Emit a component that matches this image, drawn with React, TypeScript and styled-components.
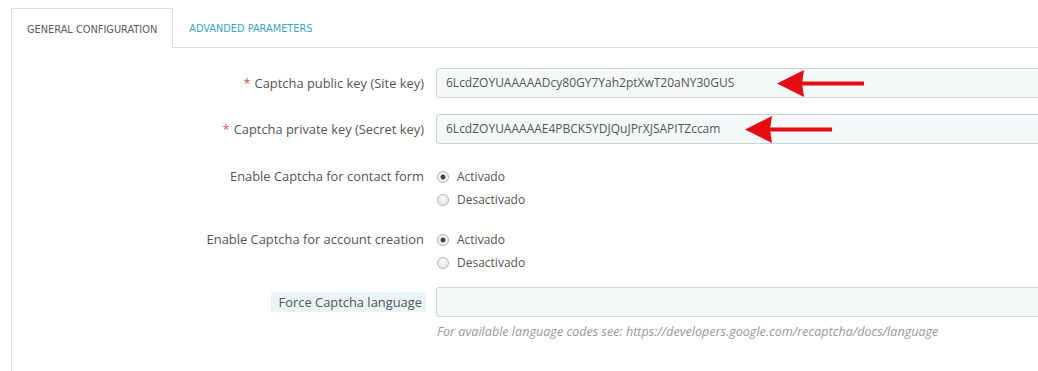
import React, {FC} from 'react';
import styled, {createGlobalStyle} from 'styled-components';

const GlobalStyle = createGlobalStyle`
  html, body {
    margin: 0;
    padding: 0;
    background: #fff;
    overflow: hidden;
  }
  body {
    font-family: "Open Sans", "Liberation Sans", sans-serif;
    font-size: 12px;
    color: #555;
  }
`;

const Page = styled.div`
  width: 1038px;
  height: 371px;
  overflow: hidden;
  padding-left: 11px;
  padding-top: 8px;
  box-sizing: border-box;
`;

const TabBar = styled.ul`
  display: flex;
  list-style: none;
  margin: 0;
  padding: 0;
  border-bottom: 1px solid #ddd;
  > li {
    height: 38px;
    display: flex;
    align-items: center;
    padding: 1px 15px 0;
    box-sizing: border-box;
    margin-bottom: -1px;
    font-family: "Liberation Sans Narrow", "DejaVu Sans Condensed", "Roboto", sans-serif;
    font-stretch: condensed;
    font-size: 10.9px;
    text-transform: uppercase;
    color: #3ba5bf;
    border: 1px solid transparent;
    border-bottom: none;
    &.selected {
      color: #5a5a5a;
      border-color: #ddd;
      background: #fff;
      height: 40px;
    }
  }
`;

const Panel = styled.div`
  border-left: 1px solid #ddd;
  height: 400px;
  padding-top: 20px;
`;

const Row = styled.div<{$mt?: number}>`
  display: grid;
  grid-template-columns: 412px 700px;
  column-gap: 12px;
  align-items: start;
  margin-top: ${p => p.$mt ?? 0}px;
`;

const Label = styled.div<{$tall?: boolean}>`
  justify-self: end;
  font-size: 12.9px;
  color: #555;
  line-height: ${p => (p.$tall ? 30 : 23)}px;
  white-space: nowrap;
`;

const HintLabel = styled.div`
  justify-self: end;
  font-size: 12.9px;
  color: #555;
  background: #e9f4f7;
  padding: 0 4px 0 8px;
  line-height: 20px;
  margin-top: 5px;
  margin-right: -2px;
`;

const Required = styled.span`
  color: #d9534f;
  margin-right: 4px;
`;

const Field = styled.div`
  position: relative;
`;

const TextInput = styled.div`
  height: 28px;
  width: 700px;
  box-sizing: content-box;
  border: 1px solid #c7d6db;
  border-radius: 3px;
  background: #f5f8f9;
  padding: 0 9px;
  line-height: 28px;
  font-size: 12px;
  color: #555;
`;

const Help = styled.div`
  font-style: italic;
  color: #999;
  font-size: 12.6px;
  margin-top: 6px;
  padding-left: 1px;
`;

const RadioList = styled.div`
  display: flex;
  flex-direction: column;
`;

const RadioOption = styled.div<{$checked?: boolean}>`
  display: flex;
  align-items: center;
  height: 23px;
  padding-left: 1px;
  font-size: 12px;
  color: #555;
  &::before {
    content: '';
    width: 10px;
    height: 10px;
    border-radius: 50%;
    border: 1px solid #b5b5b5;
    margin-right: 8px;
    background: ${p => (p.$checked
      ? 'radial-gradient(circle, #444 0 2.2px, #f4f4f4 2.8px, #e6e6e6 100%)'
      : 'radial-gradient(circle at 50% 35%, #fbfbfb 0, #e0e0e0 100%)')};
  }
`;

const ArrowWrap = styled.svg<{$left: number}>`
  position: absolute;
  top: 1px;
  left: ${p => p.$left}px;
`;

const Arrow: FC<{left: number, length: number}> = ({left, length}) => (
  <ArrowWrap $left={left} width={length} height="29" viewBox={`0 0 ${length} 29`}>
    <polygon points="0,14.5 27,1 25,14.5 27,28" fill="#e50d12"/>
    <rect x="24" y="12.5" width={length - 24} height="4" fill="#e50d12"/>
  </ArrowWrap>
);

const Radios: FC = () => (
  <RadioList>
    <RadioOption $checked>Activado</RadioOption>
    <RadioOption>Desactivado</RadioOption>
  </RadioList>
);

const App: FC = () => {
  return (
    <Page>
      <GlobalStyle/>
      <TabBar>
        <li className="selected">General configuration</li>
        <li>Advanded parameters</li>
      </TabBar>
      <Panel>
        <Row>
          <Label $tall><Required>*</Required>Captcha public key (Site key)</Label>
          <Field>
            <TextInput>6LcdZOYUAAAAADcy80GY7Yah2ptXwT20aNY30GUS</TextInput>
            <Arrow left={341} length={87}/>
          </Field>
        </Row>
        <Row $mt={16}>
          <Label $tall><Required>*</Required>Captcha private key (Secret key)</Label>
          <Field>
            <TextInput>6LcdZOYUAAAAAE4PBCK5YDJQuJPrXJSAPITZccam</TextInput>
            <Arrow left={309} length={87}/>
          </Field>
        </Row>
        <Row $mt={21}>
          <Label>Enable Captcha for contact form</Label>
          <Radios/>
        </Row>
        <Row $mt={17}>
          <Label>Enable Captcha for account creation</Label>
          <Radios/>
        </Row>
        <Row $mt={13}>
          <HintLabel>Force Captcha language</HintLabel>
          <Field>
            <TextInput/>
            <Help>For available language codes see: https://developers.google.com/recaptcha/docs/language</Help>
          </Field>
        </Row>
      </Panel>
    </Page>
  );
};

export default App;
